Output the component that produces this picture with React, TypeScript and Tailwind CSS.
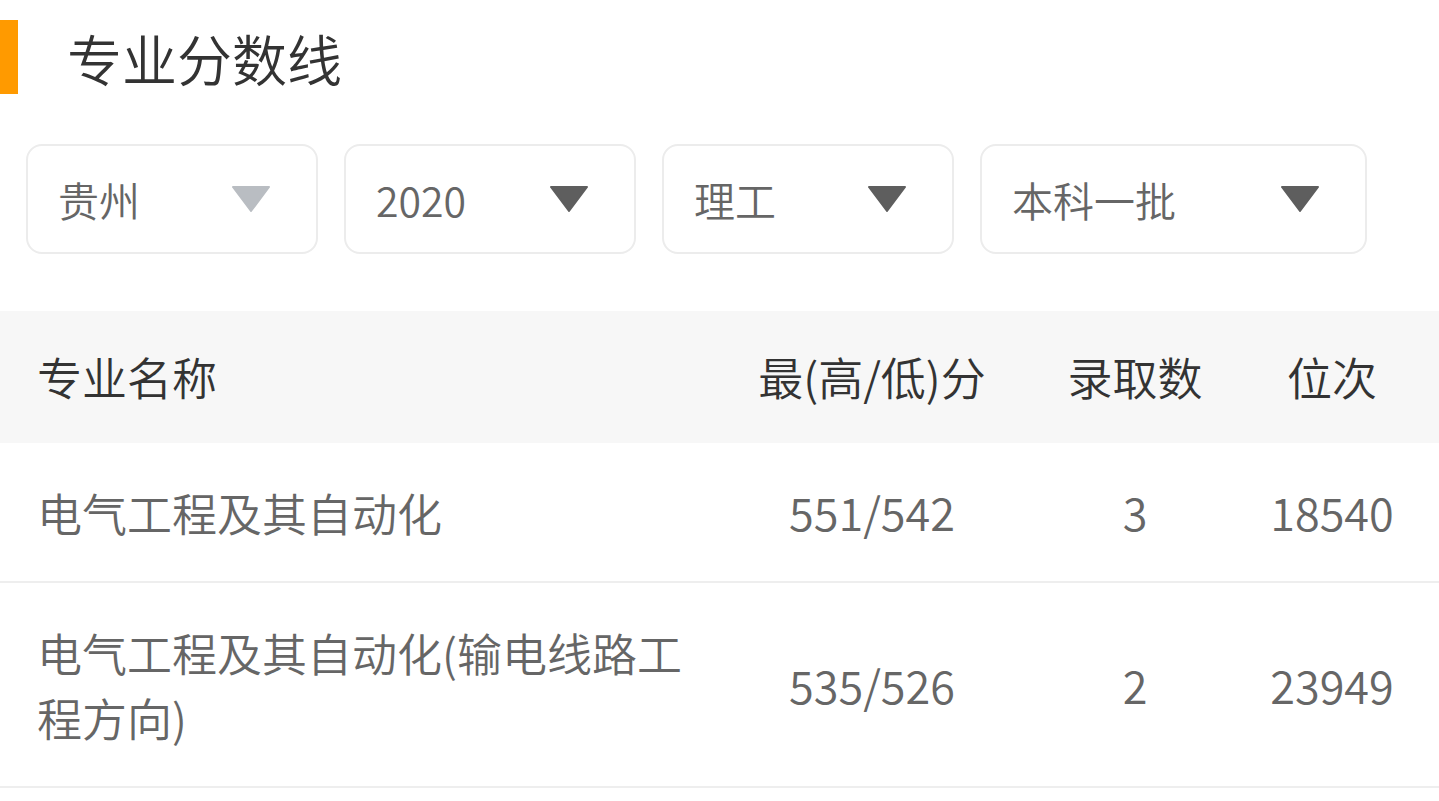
export default function App() {
  const font = {
    fontFamily: '"Noto Sans CJK SC", "Noto Sans", sans-serif',
  };
  const selects = [
    { label: "贵州", w: "w-[292px]", light: true },
    { label: "2020", w: "w-[292px]", light: false },
    { label: "理工", w: "w-[292px]", light: false },
    { label: "本科一批", w: "w-[387px]", light: false },
  ];
  const rows = [
    { name: "电气工程及其自动化", score: "551/542", count: "3", rank: "18540", h: "h-[140px]" },
    {
      name: "电气工程及其自动化(输电线路工程方向)",
      score: "535/526",
      count: "2",
      rank: "23949",
      h: "h-[205px]",
    },
  ];
  return (
    <div
      className="w-[1439px] h-[801px] bg-white overflow-hidden font-[350]"
      style={font}
    >
      <div className="flex items-center pt-[20px] h-[94px]">
        <div className="w-[18px] h-[74px] bg-[#ff9a00]" />
        <div className="ml-[49px] text-[55px] leading-[74px] text-[#333333]">专业分数线</div>
      </div>

      <div className="flex gap-[26px] pl-[26px] mt-[50px]">
        {selects.map((s) => (
          <div
            key={s.label}
            className={`${s.w} h-[110px] rounded-[16px] border-2 border-[#ececec] flex items-center justify-between pl-[30px] pr-[46px]`}
          >
            <span className="text-[41px] text-[#666666] leading-none">{s.label}</span>
            <svg width="38" height="26" viewBox="0 0 38 26">
              <polygon
                points="1,1 37,1 19,25"
                fill={s.light ? "#b9bdc2" : "#5e5e5e"}
                stroke={s.light ? "#b9bdc2" : "#5e5e5e"}
                strokeWidth="2"
                strokeLinejoin="round"
              />
            </svg>
          </div>
        ))}
      </div>

      <div className="mt-[57px] h-[132px] bg-[#f7f7f7] flex items-center text-[45px] text-[#333333]">
        <div className="w-[720px] pl-[37px]">专业名称</div>
        <div className="w-[304px] text-center">最(高/低)分</div>
        <div className="w-[222px] text-center">录取数</div>
        <div className="w-[172px] text-center">位次</div>
      </div>

      {rows.map((r) => (
        <div
          key={r.rank}
          className={`${r.h} flex items-center border-b-2 border-[#eeeeee] text-[45px] text-[#666666]`}
        >
          <div className="w-[720px] pl-[37px] pr-[12px] leading-[65px]">{r.name}</div>
          <div className="w-[304px] text-center">{r.score}</div>
          <div className="w-[222px] text-center">{r.count}</div>
          <div className="w-[172px] text-center">{r.rank}</div>
        </div>
      ))}
    </div>
  );
}
